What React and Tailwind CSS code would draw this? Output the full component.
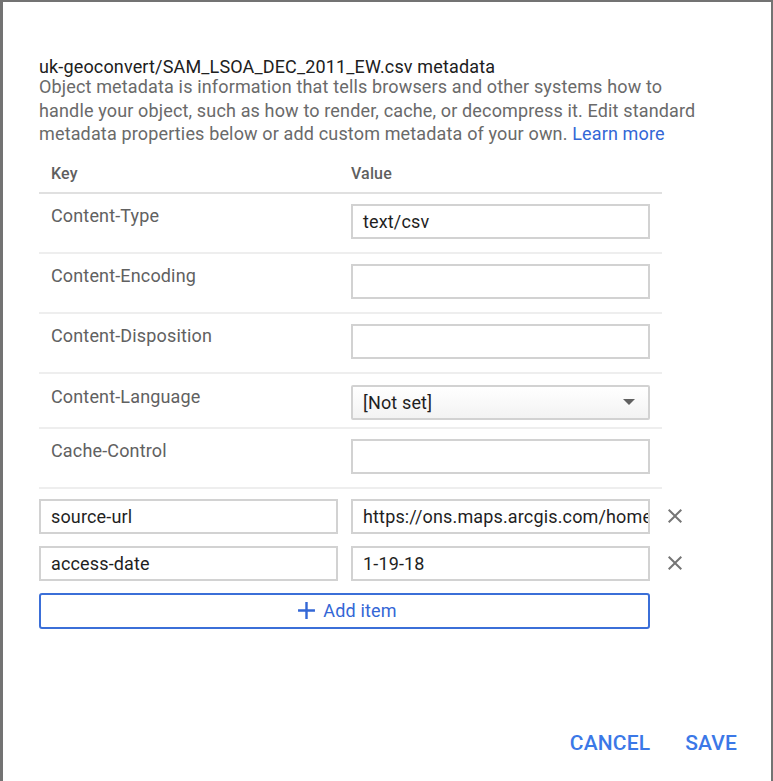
import React from "react";

const fixedRows = [
  { key: "Content-Type", value: "text/csv" },
  { key: "Content-Encoding", value: "" },
  { key: "Content-Disposition", value: "" },
  { key: "Content-Language", select: "[Not set]" },
  { key: "Cache-Control", value: "" },
];

const customRows = [
  { key: "source-url", value: "https://ons.maps.arcgis.com/home/item.html" },
  { key: "access-date", value: "1-19-18" },
];

function CloseIcon() {
  return (
    <svg width="24" height="24" viewBox="0 0 24 24" className="fill-[#757575]">
      <path d="M19 6.41L17.59 5 12 10.59 6.41 5 5 6.41 10.59 12 5 17.59 6.41 19 12 13.41 17.59 19 19 17.59 13.41 12z" />
    </svg>
  );
}

function TextBox({ value, className = "" }) {
  return (
    <div
      className={`h-[35px] border-2 border-[#d2d2d2] bg-white px-[10px] flex items-center overflow-hidden whitespace-nowrap text-[18px] text-[#1f1f1f] ${className}`}
    >
      {value}
    </div>
  );
}

function FixedRow({ row }) {
  const isSelect = Boolean(row.select);
  return (
    <div
      className={`flex border-b-2 border-[#eeeeee] ${isSelect ? "h-[55px] pt-[11px]" : "h-[60px] pt-[10px]"}`}
    >
      <div className="w-[312px] pl-[12px] pt-[2px] leading-[20px] text-[18px] text-[#616161]">
        {row.key}
      </div>
      {isSelect ? (
        <div className="w-[299px] h-[35px] border-2 border-[#d2d2d2] rounded-[2px] bg-gradient-to-b from-white to-[#f3f3f3] px-[10px] flex items-center justify-between text-[18px] text-[#1f1f1f]">
          <span>{row.select}</span>
          <svg width="12" height="6" viewBox="0 0 12 6" className="fill-[#616161] mr-[3px]">
            <path d="M0 0h12L6 6z" />
          </svg>
        </div>
      ) : (
        <TextBox value={row.value} className="w-[299px]" />
      )}
    </div>
  );
}

export default function App() {
  return (
    <div
      className="h-[781px] bg-[#737373] pl-[3px] pr-[2px] pt-[2px] tracking-[0.15px]"
      style={{ fontFamily: "Roboto, 'Liberation Sans', sans-serif" }}
    >
      <div className="h-full bg-white flex flex-col pl-[36px] pt-[55px]">
        <div className="w-[720px]">
          <div className="text-[18px] leading-[20px] text-[#202020]">
            uk-geoconvert/SAM_LSOA_DEC_2011_EW.csv metadata
          </div>
          <p className="-mt-[2px] text-[18px] leading-[23.5px] text-[#6a6a6a]">
            Object metadata is information that tells browsers and other systems how to
            <br />
            handle your object, such as how to render, cache, or decompress it. Edit standard
            <br />
            metadata properties below or add custom metadata of your own.{" "}
            <span className="text-[#3367d6]">Learn more</span>
          </p>
        </div>

        <div className="w-[623px] mt-[8px]">
          <div className="flex h-[40px] items-end pb-[8px] border-b-2 border-[#e0e0e0] text-[16px] font-medium text-[#5f5f5f] leading-[20px]">
            <div className="w-[312px] pl-[12px]">Key</div>
            <div>Value</div>
          </div>
          {fixedRows.map((row) => (
            <FixedRow key={row.key} row={row} />
          ))}
        </div>

        <div className="flex flex-col gap-[12px] mt-[10px]">
          {customRows.map((row) => (
            <div key={row.key} className="flex items-center">
              <TextBox value={row.key} className="w-[299px]" />
              <TextBox value={row.value} className="w-[299px] ml-[13px]" />
              <div className="ml-[13px] flex items-center">
                <CloseIcon />
              </div>
            </div>
          ))}
        </div>

        <button className="mt-[12px] w-[611px] h-[36px] border-2 border-[#3b6fd8] rounded-[3px] flex items-center justify-center gap-[2px] text-[18px] text-[#3367d6]">
          <svg width="29" height="29" viewBox="0 0 24 24" className="fill-[#3367d6]">
            <path d="M19 13h-6v6h-2v-6H5v-2h6V5h2v6h6v2z" />
          </svg>
          Add item
        </button>

        <div className="mt-auto mb-[26px] flex justify-end gap-[35px] pr-[34px] text-[21px] leading-[24px] font-medium text-[#3b78e7]">
          <button>CANCEL</button>
          <button>SAVE</button>
        </div>
      </div>
    </div>
  );
}
